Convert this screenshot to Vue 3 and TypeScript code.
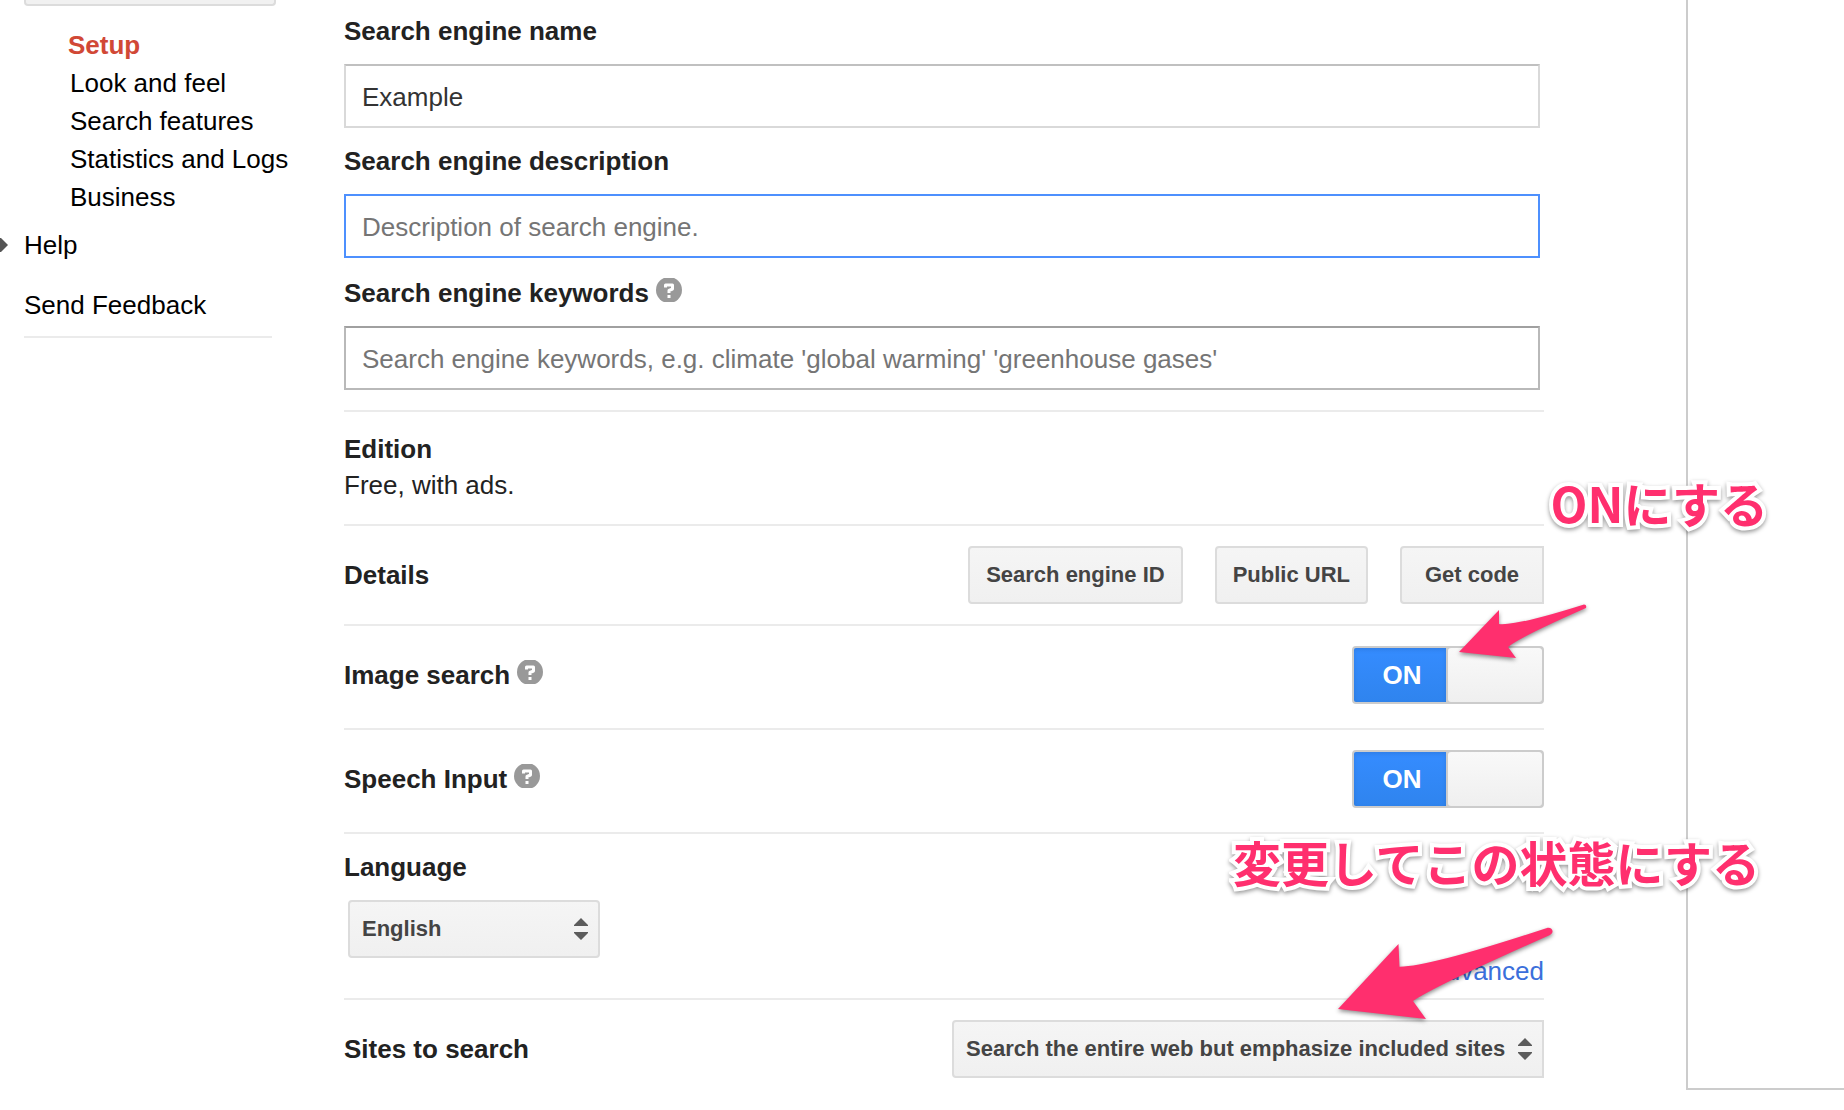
<script setup lang="ts">
import { ref } from 'vue'

interface NavItem {
  label: string
  active?: boolean
}

const navItems: NavItem[] = [
  { label: 'Setup', active: true },
  { label: 'Look and feel' },
  { label: 'Search features' },
  { label: 'Statistics and Logs' },
  { label: 'Business' },
]

const detailButtons: string[] = ['Search engine ID', 'Public URL', 'Get code']

const name = ref('Example')
const description = ref('')
const keywords = ref('')
const imageSearch = ref(true)
const speechInput = ref(true)
const language = ref('English')
const sites = ref('Search the entire web but emphasize included sites')
</script>

<template>
  <div class="page">
    <aside class="sidebar">
      <div class="engine-picker"></div>
      <nav class="subnav">
        <a v-for="item in navItems" :key="item.label" href="#" :class="{ active: item.active }">{{ item.label }}</a>
      </nav>
      <a class="side-link help" href="#">
        <svg class="caret" width="8" height="14" viewBox="0 0 8 14" aria-hidden="true"><path d="M0 0h1l7 7-7 7H0z" fill="#555" /></svg>
        Help
      </a>
      <a class="side-link feedback" href="#">Send Feedback</a>
    </aside>

    <main class="main">
      <section class="fields">
        <label for="name">Search engine name</label>
        <input id="name" v-model="name" type="text" />
        <label for="description">Search engine description</label>
        <input id="description" v-model="description" class="focused" type="text" placeholder="Description of search engine." />
        <div class="label-line">
          <label for="keywords">Search engine keywords</label>
          <svg class="hint" viewBox="0 0 26 24" aria-hidden="true">
            <ellipse cx="13" cy="12" rx="13" ry="13" fill="#999" />
            <path d="M9.500 9.500V7H16.500V11L13 12.500V15" fill="none" stroke="#fff" stroke-width="3" stroke-linejoin="round" />
            <path d="M11.500 17h3v3h-3z" fill="#fff" />
          </svg>
        </div>
        <input id="keywords" v-model="keywords" class="hovered" type="text" placeholder="Search engine keywords, e.g. climate 'global warming' 'greenhouse gases'" />
      </section>

      <section class="edition">
        <h2>Edition</h2>
        <p>Free, with ads.</p>
      </section>

      <section class="row details">
        <h2>Details</h2>
        <div class="buttons">
          <button v-for="b in detailButtons" :key="b" type="button">{{ b }}</button>
        </div>
      </section>

      <section class="row switch-row">
        <div class="label-line">
          <label for="image-search">Image search</label>
          <svg class="hint" viewBox="0 0 26 24" aria-hidden="true">
            <ellipse cx="13" cy="12" rx="13" ry="13" fill="#999" />
            <path d="M9.500 9.500V7H16.500V11L13 12.500V15" fill="none" stroke="#fff" stroke-width="3" stroke-linejoin="round" />
            <path d="M11.500 17h3v3h-3z" fill="#fff" />
          </svg>
        </div>
        <div class="toggle">
          <input id="image-search" v-model="imageSearch" type="checkbox" role="switch" />
          <span class="state">ON</span>
          <span class="knob"></span>
        </div>
        <p class="note note-on">ONにする</p>
        <svg class="arrow arrow-on" viewBox="0 0 140 66" aria-hidden="true">
          <path d="M9 52L49 10L49 24Q66 26 134 4.500Q137 4.500 136 8Q70 37 58 47L66 58Z" fill="#ff2f6e" />
        </svg>
      </section>

      <section class="row switch-row">
        <div class="label-line">
          <label for="speech-input">Speech Input</label>
          <svg class="hint" viewBox="0 0 26 24" aria-hidden="true">
            <ellipse cx="13" cy="12" rx="13" ry="13" fill="#999" />
            <path d="M9.500 9.500V7H16.500V11L13 12.500V15" fill="none" stroke="#fff" stroke-width="3" stroke-linejoin="round" />
            <path d="M11.500 17h3v3h-3z" fill="#fff" />
          </svg>
        </div>
        <div class="toggle">
          <input id="speech-input" v-model="speechInput" type="checkbox" role="switch" />
          <span class="state">ON</span>
          <span class="knob"></span>
        </div>
      </section>

      <section class="language">
        <div class="language-field">
          <label for="language">Language</label>
          <div class="select">
            <select id="language" v-model="language">
              <option>English</option>
            </select>
            <svg viewBox="0 0 14 22" aria-hidden="true"><path d="M7 0l7 7v1H0V7zM7 22l7-7v-1H0v1z" fill="#5c5c5c" /></svg>
          </div>
        </div>
        <a class="advanced" href="#">Advanced</a>
        <p class="note note-change">変更してこの状態にする</p>
        <svg class="arrow arrow-change" viewBox="0 0 224 102" aria-hidden="true">
          <path d="M4 85L64.500 20L65.500 42.700Q95 43 213 4C218 3 221 8 216 11Q101 62 79 77L92 95Z" fill="#ff2f6e" />
        </svg>
      </section>

      <section class="row sites">
        <label for="sites">Sites to search</label>
        <div class="select">
          <select id="sites" v-model="sites">
            <option>Search the entire web but emphasize included sites</option>
          </select>
          <svg viewBox="0 0 14 22" aria-hidden="true"><path d="M7 0l7 7v1H0V7zM7 22l7-7v-1H0v1z" fill="#5c5c5c" /></svg>
        </div>
      </section>
    </main>

    <aside class="preview"></aside>
  </div>
</template>

<style>
body {
  margin: 0;
  background: #fff;
}
</style>

<style scoped>
.page {
  display: flex;
  padding-bottom: 20px;
  overflow: hidden;
  font-family: "Liberation Sans", Arial, sans-serif;
  font-size: 26px;
  line-height: 30px;
  color: #222;
}

.page * {
  box-sizing: border-box;
}

h2,
p {
  margin: 0;
  font-size: inherit;
}

label,
h2 {
  font-weight: bold;
}

/* Sidebar */
.sidebar {
  flex: 0 0 344px;
  padding-left: 24px;
  line-height: 38px;
}

.sidebar a {
  display: block;
  color: #000;
  text-decoration: none;
}

.engine-picker {
  width: 252px;
  height: 6px;
  margin-bottom: 20px;
  border: 2px solid #dcdcdc;
  border-top: 0;
  border-radius: 0 0 4px 4px;
  background: #f1f1f1;
}

.subnav {
  padding-left: 46px;
}

.sidebar .active {
  margin-left: -2px;
  color: #d14836;
  font-weight: bold;
}

.help {
  position: relative;
  margin-top: 10px;
}

.caret {
  position: absolute;
  left: -24px;
  top: 12px;
}

.feedback {
  width: 248px;
  margin-top: 22px;
  padding-bottom: 12px;
  border-bottom: 2px solid #ebebeb;
}

/* Main column */
.main {
  position: relative;
  z-index: 1;
  flex: 1;
  min-width: 0;
}

.fields {
  display: flex;
  flex-direction: column;
  gap: 18px;
  padding: 16px 4px 20px 0;
}

.label-line {
  display: flex;
  align-items: flex-start;
  gap: 7px;
}

.fields .label-line {
  margin-top: 2px;
}

.hint {
  width: 26px;
  height: 24px;
}

.fields input {
  width: 100%;
  height: 64px;
  padding: 2px 16px 0;
  border: 2px solid #d9d9d9;
  border-top-color: #c0c0c0;
  border-radius: 0;
  outline: none;
  background: #fff;
  font: inherit;
  color: #333;
}

.fields input::placeholder {
  color: #757575;
  opacity: 1;
}

.fields input.focused {
  border-color: #4d90fe;
}

.fields input.hovered {
  border-color: #a0a0a0 #b9b9b9 #b9b9b9;
}

.edition {
  padding: 19px 0 21px;
  border-top: 2px solid #ebebeb;
  line-height: 36px;
}

.row {
  position: relative;
  display: flex;
  align-items: center;
  justify-content: space-between;
  padding: 20px 0;
  border-top: 2px solid #ebebeb;
}

.switch-row {
  padding-bottom: 24px;
}

.sites {
  padding-bottom: 12px;
}

.buttons {
  display: flex;
  gap: 32px;
}

button,
select {
  height: 58px;
  border: 2px solid #dcdcdc;
  border-radius: 4px;
  background: linear-gradient(#f5f5f5, #f0f0f0);
  font: bold 22px "Liberation Sans", Arial, sans-serif;
  color: #444;
}

button {
  min-width: 144px;
  padding: 0 16px;
}

button:last-child,
.sites select {
  border-radius: 4px 0 0 4px;
}

.toggle {
  position: relative;
  display: flex;
  width: 192px;
  height: 58px;
  border: 2px solid #ccc;
  border-radius: 4px;
  overflow: hidden;
  background: #ccc;
}

.toggle input {
  position: absolute;
  inset: 0;
  width: 100%;
  height: 100%;
  margin: 0;
  opacity: 0;
}

.state {
  width: 92px;
  background: linear-gradient(#358cff, #2f84ee);
  box-shadow: inset 0 2px 4px rgba(0, 0, 0, 0.1);
  color: #fff;
  font-weight: bold;
  line-height: 54px;
  text-align: center;
  padding-left: 4px;
}

.knob {
  flex: 1;
  margin-left: 2px;
  border-radius: 3px;
  background: linear-gradient(#f9f9f9, #efefef);
}

.language {
  position: relative;
  display: flex;
  align-items: flex-end;
  justify-content: space-between;
  padding: 18px 0 12px;
  border-top: 2px solid #ebebeb;
}

.language-field {
  display: flex;
  flex-direction: column;
  gap: 18px;
  padding-bottom: 28px;
}

.language-field .select {
  width: 252px;
  margin-left: 4px;
}

.select {
  position: relative;
}

select {
  appearance: none;
  display: block;
  width: 100%;
  padding: 0 36px 2px 12px;
}

.select svg {
  position: absolute;
  top: 18px;
  right: 12px;
  width: 14px;
  height: 22px;
  pointer-events: none;
}

.advanced {
  color: #3b6fdb;
  text-decoration: none;
}

/* Annotations over the form */
.note {
  position: absolute;
  z-index: 2;
  font: 700 48px/60px "Noto Sans CJK JP", sans-serif;
  color: #ff2f6e;
  white-space: nowrap;
  -webkit-text-stroke: 8px #fff;
  paint-order: stroke fill;
  filter: drop-shadow(0 2px 2px rgba(0, 0, 0, 0.4));
}

.note-on {
  right: -224px;
  top: -154px;
}

.note-change {
  right: -216px;
  top: -3px;
}

.arrow {
  position: absolute;
  z-index: 2;
  filter: drop-shadow(0 2px 2px rgba(0, 0, 0, 0.45));
  pointer-events: none;
}

.arrow-on {
  top: -26px;
  right: -46px;
  width: 140px;
  height: 66px;
}

.arrow-change {
  top: 90px;
  right: -14px;
  width: 224px;
  height: 102px;
}

.preview {
  flex: 0 0 158px;
  margin-left: 142px;
  border-left: 2px solid #ccc;
  border-bottom: 2px solid #ccc;
}
</style>
